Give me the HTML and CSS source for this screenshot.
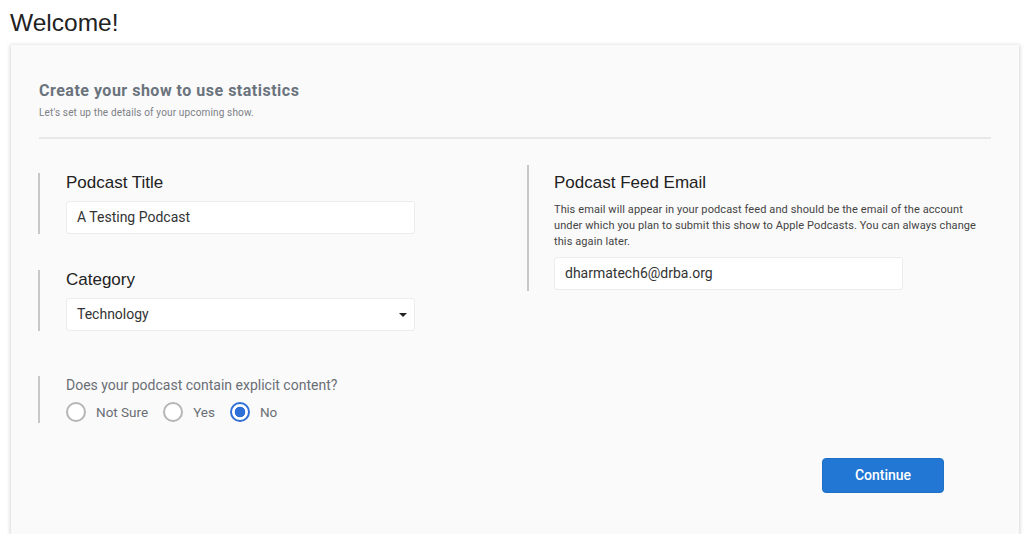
FILE: index.html
```html
<!DOCTYPE html>
<html>

<head>
    <title>Welcome</title>
    <link rel="stylesheet" href="styles.css">
</head>

<body>
    <h1 class="page-title">Welcome!</h1>

    <div class="card">
        <div class="card-head">
            <h2 class="card-title">Create your show to use statistics</h2>
            <p class="card-subtitle">Let's set up the details of your upcoming show.</p>
        </div>

        <div class="form-grid">
            <div class="col-left">
                <div class="field">
                    <label class="field-label">Podcast Title</label>
                    <div class="text-input">A Testing Podcast</div>
                </div>

                <div class="field">
                    <label class="field-label">Category</label>
                    <div class="text-input select-input">
                        <span>Technology</span>
                        <span class="caret"></span>
                    </div>
                </div>

                <div class="field field-radio">
                    <p class="question">Does your podcast contain explicit content?</p>
                    <div class="radio-row">
                        <span class="radio"></span><span class="radio-text">Not Sure</span>
                        <span class="radio"></span><span class="radio-text">Yes</span>
                        <span class="radio checked"></span><span class="radio-text">No</span>
                    </div>
                </div>
            </div>

            <div class="col-right">
                <div class="field field-email">
                    <label class="field-label">Podcast Feed Email</label>
                    <p class="help">This email will appear in your podcast feed and should be the email of the account
                        under which you plan to submit this show to Apple Podcasts. You can always change
                        this again later.</p>
                    <div class="text-input">dharmatech6@drba.org</div>
                </div>
            </div>
        </div>

        <div class="actions">
            <div class="btn">Continue</div>
        </div>
    </div>
</body>

</html>
```

FILE: styles.css
```css
body {
    margin: 0;
    padding: 0 5px 0 11px;
    font-family: Roboto, "Liberation Sans", Arial, sans-serif;
    background: white;
}

.page-title {
    margin: 0;
    padding: 10px 0 0 0;
    margin-left: -1px;
    height: 35px;
    box-sizing: border-box;
    font-family: "Liberation Sans", Arial, sans-serif;
    font-weight: normal;
    font-size: 24.5px;
    line-height: 26px;
    color: #222;
}

.card {
    margin-top: 10px;
    width: 1008px;
    height: 489px;
    box-sizing: border-box;
    background: #fafafa;
    box-shadow: 0px 1px 4px 1px rgba(0, 0, 0, 0.16);
    padding: 37px 28px 0 28px;
    display: flex;
    flex-direction: column;
}

.card-head {
    border-bottom: 2px solid #e8e8e8;
    padding-bottom: 17px;
}

.card-title {
    margin: 0;
    font-size: 16px;
    line-height: 18px;
    font-weight: bold;
    letter-spacing: 0.5px;
    color: #6b737d;
}

.card-subtitle {
    margin: 6px 0 0 0;
    font-size: 10px;
    line-height: 14px;
    letter-spacing: 0.15px;
    color: #7c8087;
}

.form-grid {
    display: grid;
    grid-template-columns: 489px 1fr;
    margin-top: 32px;
    margin-left: -1px;
}

.field {
    border-left: 2px solid #c8c8c8;
    padding-left: 26px;
    margin-bottom: 36px;
}

.field-label {
    display: block;
    font-family: "Liberation Sans", Arial, sans-serif;
    font-size: 17px;
    line-height: 20px;
    color: #222;
    margin-top: 2px;
    margin-bottom: 8px;
}

.text-input {
    box-sizing: border-box;
    width: 349px;
    height: 33px;
    background: white;
    border: 1px solid #ececec;
    border-radius: 3px;
    padding: 0 10px;
    font-size: 14px;
    line-height: 31px;
    color: #333;
}

.select-input {
    display: flex;
    justify-content: space-between;
    align-items: center;
}

.caret {
    width: 0;
    height: 0;
    border-left: 4px solid transparent;
    border-right: 4px solid transparent;
    border-top: 4px solid #222;
    margin-right: -3px;
}

.field-radio {
    margin-top: 45px;
    margin-bottom: 0;
    padding-bottom: 1px;
}

.question {
    margin: 0;
    font-size: 14px;
    line-height: 18px;
    color: #6a6e75;
}

.radio-row {
    display: flex;
    align-items: center;
    margin-top: 8px;
}

.radio {
    box-sizing: border-box;
    width: 20px;
    height: 20px;
    border-radius: 50%;
    border: 2px solid #b5b5b5;
    background: white;
    margin-right: 10px;
}

.radio.checked {
    border-color: #2f6fd8;
    background: radial-gradient(circle, #2f6fd8 0 5px, white 5.6px);
}

.radio-text {
    font-size: 13.5px;
    color: #6a6e75;
    margin-right: 15px;
}

.col-right .field {
    border-left: 2px solid #c8c8c8;
    padding-left: 25px;
    padding-top: 6px;
    margin-top: -6px;
}

.field-email {
    padding-bottom: 1px;
}

.field-email .field-label {
    margin-bottom: 9px;
}

.help {
    margin: 0 0 7px 0;
    font-size: 11px;
    line-height: 16px;
    letter-spacing: 0.1px;
    color: #444;
    width: 440px;
}

.actions {
    display: flex;
    justify-content: flex-end;
    margin-top: auto;
    padding-right: 47px;
    padding-bottom: 41px;
}

.btn {
    width: 122px;
    height: 35px;
    border-radius: 4px;
    background-color: #2177d3;
    border: 1px solid #1e6fc6;
    box-sizing: border-box;
    color: white;
    font-size: 14px;
    font-weight: 500;
    text-align: center;
    line-height: 33px;
    cursor: pointer;
}
```
